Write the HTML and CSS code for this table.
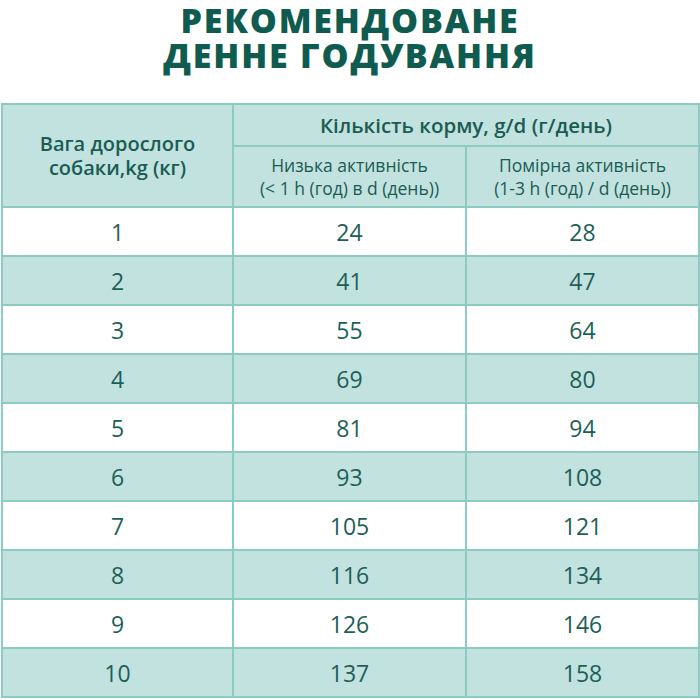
FILE: index.html
```html
<!DOCTYPE html>
<html lang="uk">
<head>
<meta charset="utf-8">
<link rel="stylesheet" href="styles.css">
</head>
<body>
<div class="page">
  <h1 class="title"><span class="tline">РЕКОМЕНДОВАНЕ</span><span class="tline">ДЕННЕ ГОДУВАННЯ</span></h1>
  <table class="feed">
    <colgroup><col class="c1"><col class="c2"><col class="c3"></colgroup>
    <thead>
      <tr class="h1">
        <th rowspan="2" class="weight">Вага дорослого<br>собаки,kg (кг)</th>
        <th colspan="2" class="amount">Кількість корму, g/d (г/день)</th>
      </tr>
      <tr class="h2">
        <th class="sub">Низька активність<br>(&lt; 1 h (год) в d (день))</th>
        <th class="sub">Помірна активність<br>(1-3 h (год) / d (день))</th>
      </tr>
    </thead>
    <tbody>
      <tr><td>1</td><td>24</td><td>28</td></tr>
      <tr class="alt"><td>2</td><td>41</td><td>47</td></tr>
      <tr><td>3</td><td>55</td><td>64</td></tr>
      <tr class="alt"><td>4</td><td>69</td><td>80</td></tr>
      <tr><td>5</td><td>81</td><td>94</td></tr>
      <tr class="alt"><td>6</td><td>93</td><td>108</td></tr>
      <tr><td>7</td><td>105</td><td>121</td></tr>
      <tr class="alt"><td>8</td><td>116</td><td>134</td></tr>
      <tr><td>9</td><td>126</td><td>146</td></tr>
      <tr class="alt"><td>10</td><td>137</td><td>158</td></tr>
    </tbody>
  </table>
</div>
</body>
</html>
```

FILE: styles.css
```css
html, body {
  margin: 0;
  padding: 0;
  background: #ffffff;
}
.page {
  width: 700px;
  font-family: "Open Sans", "Noto Sans", sans-serif;
  color: #1d5f56;
}
.title {
  margin: 0;
  height: 103px;
  box-sizing: border-box;
  padding-top: 3px;
  display: flex;
  flex-direction: column;
  align-items: center;
  gap: 0;
  font-family: "Open Sans", sans-serif;
  font-weight: 800;
  font-size: 34px;
  letter-spacing: 1.8px;
  color: #0f5b4f;
}
.tline {
  display: block;
  height: 35px;
  line-height: 35px;
}
.feed {
  margin-left: 1px;
  width: 697px;
  border-collapse: collapse;
  table-layout: fixed;
  border: 2px solid #8ccbc2;
}
.c1 { width: 231px; }
.c2 { width: 233px; }
.c3 { width: 233px; }
.feed th, .feed td {
  border: 2px solid #8ccbc2;
  text-align: center;
  padding: 0;
}
.feed thead th {
  background: #c1e2df;
  color: #1a5c53;
}
.weight {
  font-size: 20px;
  font-weight: 600;
  line-height: 24px;
}
.amount {
  height: 40px;
  font-size: 20.5px;
  font-weight: 600;
}
.sub {
  height: 59px;
  font-size: 17.5px;
  font-weight: 400;
  line-height: 23px;
}
.feed td {
  height: 47px;
  font-size: 23px;
  color: #1d5f56;
  background: #ffffff;
}
.feed tr.alt td {
  background: #c1e2df;
}
```
